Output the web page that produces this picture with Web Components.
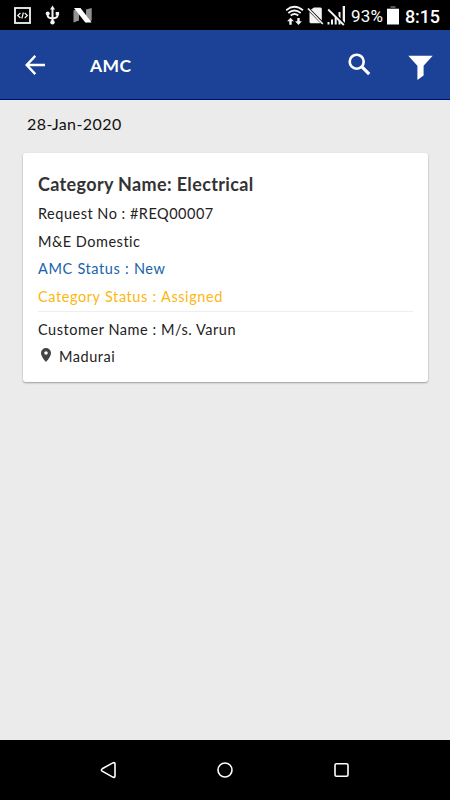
<!DOCTYPE html>
<html lang="en">
<head>
<meta charset="utf-8">
<meta name="viewport" content="width=device-width, initial-scale=1">
<title>AMC</title>
<style>
    body {
        margin: 0;
        background-color: #ebebeb;
        font-family: Lato, "Open Sans", sans-serif;
    }
</style>
</head>
<body>
<amc-screen></amc-screen>

<script>
class StatusBar extends HTMLElement {

    constructor() {
        super();
        this.shadowDOM = this.attachShadow({mode: "open"});
    }

    connectedCallback() {
        this.render();
    }

    render() {
        this.shadowDOM.innerHTML = `
        <style>
        :host {
            display: flex;
            justify-content: space-between;
            height: 30px;
            background-color: #000;
            color: #fff;
            font-family: Roboto, sans-serif;
        }

        svg {
            display: block;
        }

        .info {
            display: flex;
            padding-right: 10px;
            line-height: 33px;
        }

        .percent {
            width: 36px;
            font-size: 17px;
            letter-spacing: 0.2px;
            white-space: nowrap;
        }

        .clock {
            font-size: 18px;
            font-weight: 500;
            letter-spacing: -0.1px;
        }
        </style>
        <svg width="110" height="30" viewBox="0 0 110 30" fill="none" stroke="#f4f4f4">
            <rect x="15" y="8" width="15" height="15" stroke-width="1.8"/>
            <path d="M20.5 13 17.7 15.5 20.5 18M24.7 13 27.4 15.5 24.7 18M23.4 12.5 21.8 18.5" stroke-width="1.2"/>
            <path d="M52.5 8V22M47.7 13V15.5Q47.7 18 52.5 18.5M57.5 13V15.5Q57.5 18 52.5 18.5" stroke-width="2"/>
            <path d="M52.5 5.5 55 9.5H50ZM55.7 12h3.4v3.2h-3.4Z" fill="#f4f4f4" stroke="none"/>
            <circle cx="47.7" cy="13.5" r="2" fill="#f4f4f4" stroke="none"/>
            <circle cx="52.5" cy="22.3" r="2.2" fill="#f4f4f4" stroke="none"/>
            <path d="M73.5 10.5 79 8V20.5L73.5 22.5ZM86 9.5 91.7 8V20.5L86 22.5Z" fill="#929292" stroke="none"/>
            <path d="M74 8H80.5L91.7 22.5H85.3Z" fill="#fff" stroke="none"/>
        </svg>
        <div class="info">
            <svg width="65" height="30" viewBox="286 0 65 30" fill="#f4f4f4">
                <g fill="none" stroke="#f4f4f4" stroke-width="1.8">
                    <path d="M286 10.3Q294.5 3.2 303 10.3M288.3 13Q294.5 8 300.7 13M290.7 15.5Q294.5 12.5 298.3 15.5"/>
                </g>
                <path d="M290.5 17.8 293.9 21.3H291.7V24.8H289.3V21.3H287.1ZM297.3 18h2.4v3.3h2.2L298.5 25 295.1 21.3h2.2Z"/>
                <path d="M314 7.5H320.5Q321.8 7.5 321.8 9V20.5L311 9.5ZM309.5 12 320.5 23.3H311Q309.5 23.3 309.5 21.8Z"/>
                <path d="M308 8.5 322.8 24" stroke="#f4f4f4" stroke-width="1.8"/>
                <path d="M327.5 22h2v2.5h-2zM331 19.5h2v5h-2zM334.7 16.5h2v8h-2zM338.5 12h2v12.5h-2zM342.7 6h2.3v18.5h-2.3z"/>
                <path d="M329.5 8.6 345 24.6" stroke="#000" stroke-width="2.2"/>
                <path d="M328.2 9.5 343.8 25" stroke="#f4f4f4" stroke-width="1.8"/>
            </svg>
            <span class="percent">93%</span>
            <svg width="18" height="30" viewBox="387 0 18 30">
                <path d="M390.5 6h5v2h-5z" fill="#555"/>
                <path d="M387 8.7h12V24.5h-12z" fill="#fff"/>
            </svg>
            <span class="clock">8:15</span>
        </div>
        `;
    }
}

class AppBar extends HTMLElement {

    constructor() {
        super();
        this.shadowDOM = this.attachShadow({mode: "open"});
    }

    connectedCallback() {
        this.render();
    }

    render() {
        this.shadowDOM.innerHTML = `
        <style>
        :host {
            display: flex;
            align-items: center;
            box-sizing: border-box;
            height: 70px;
            padding: 0 17px 0 25px;
            border-bottom: 1px solid #001070;
            background-color: #1b4297;
            color: #fff;
        }

        h1 {
            flex: 1;
            margin: 0;
            padding: 3px 0 0 45px;
            font-size: 17.5px;
            font-weight: 700;
            letter-spacing: 0.4px;
            line-height: 24px;
        }

        svg {
            display: block;
        }

        .search {
            margin-right: 37px;
        }

        .filter {
            margin-top: 7px;
        }
        </style>
        <svg width="20" height="20" viewBox="0 0 20 20" fill="none" stroke="#fff" stroke-width="2.4">
            <path d="M10.3 .9 1.7 10 10.3 19.1M1.7 10H20"/>
        </svg>
        <h1><slot></slot></h1>
        <svg class="search" width="23" height="23" viewBox="0 0 23 23" fill="none" stroke="#fff">
            <circle cx="8.7" cy="8.7" r="7" stroke-width="2.6"/>
            <path d="M13.7 13.7 21.2 21.2" stroke-width="3.2"/>
        </svg>
        <svg class="filter" width="25" height="26" viewBox="0 0 25 26" fill="#fff">
            <path d="M.3.8H24.7L15.6 10.8V20.5L9.4 25V10.8Z"/>
        </svg>
        `;
    }
}

class RequestCard extends HTMLElement {

    constructor() {
        super();
        this.shadowDOM = this.attachShadow({mode: "open"});
    }

    connectedCallback() {
        this.render();
    }

    render() {
        this.shadowDOM.innerHTML = `
        <style>
        :host {
            display: block;
            box-sizing: border-box;
            height: 229px;
            margin: 0 22px 0 22.5px;
            padding: 17.5px 15px 0 15.5px;
            border-radius: 3px;
            background-color: #fff;
            box-shadow: 0 1px 2px rgba(0, 0, 0, 0.35);
            color: #222;
            font-size: 14.5px;
            letter-spacing: 0.5px;
            line-height: 27.5px;
            white-space: nowrap;
        }

        h2 {
            margin: 0 0 2px;
            color: #333;
            font-size: 18px;
            font-weight: 700;
            letter-spacing: 0.35px;
            line-height: 28px;
        }

        .customer {
            margin-top: 1px;
            padding-top: 4px;
            border-top: 1px solid #eee;
        }
        </style>
        <h2><slot name="title"></slot></h2>
        <slot></slot>
        <div class="customer"><slot name="customer"></slot></div>
        `;
    }
}

class CardLine extends HTMLElement {

    constructor() {
        super();
        this.shadowDOM = this.attachShadow({mode: "open"});
    }

    connectedCallback() {
        this.render();
    }

    render() {
        this.shadowDOM.innerHTML = `
        <style>
        :host {
            display: flex;
            align-items: center;
            height: 27.5px;
        }

        :host([status]) {
            letter-spacing: 0.58px;
            word-spacing: 0.4px;
        }

        :host([status="new"]) {
            color: #1763ad;
        }

        :host([status="assigned"]) {
            color: #fcb711;
        }

        :host([slot="customer"]) {
            letter-spacing: 0.54px;
        }

        svg {
            display: none;
            margin: -4px 8px 0 3px;
        }

        :host([place]) {
            margin-top: -0.5px;
        }

        :host([place]) svg {
            display: block;
        }
        </style>
        <svg width="10" height="14" viewBox="0 0 10 14" fill="#444">
            <path fill-rule="evenodd" d="M5 0A5 5 0 0 0 0 5C0 8.7 5 14 5 14S10 8.7 10 5A5 5 0 0 0 5 0ZM5 3.2A1.8 1.8 0 1 1 5 6.8 1.8 1.8 0 0 1 5 3.2Z"/>
        </svg>
        <span><slot></slot></span>
        `;
    }
}

class NavBar extends HTMLElement {

    constructor() {
        super();
        this.shadowDOM = this.attachShadow({mode: "open"});
    }

    connectedCallback() {
        this.render();
    }

    render() {
        this.shadowDOM.innerHTML = `
        <style>
        :host {
            display: flex;
            align-items: center;
            justify-content: space-between;
            box-sizing: border-box;
            height: 60px;
            padding: 0 100px;
            background-color: #000;
        }

        svg {
            display: block;
            fill: none;
            stroke: #fff;
            stroke-width: 1.6;
        }
        </style>
        <svg width="17" height="18" viewBox="0 0 17 18">
            <path d="M2.2 7.8 12.8 1.9Q15 1 15 3V15Q15 17 12.8 16.1L2.2 10.2Q.6 9 2.2 7.8Z"/>
        </svg>
        <svg width="16" height="16" viewBox="0 0 16 16">
            <circle cx="8" cy="8" r="7"/>
        </svg>
        <svg width="17" height="16" viewBox="0 0 17 16">
            <rect x="2" y="1.7" width="13" height="12.6" rx="1.5"/>
        </svg>
        `;
    }
}

class AmcScreen extends HTMLElement {

    constructor() {
        super();
        this.shadowDOM = this.attachShadow({mode: "open"});
    }

    connectedCallback() {
        this.render();
    }

    render() {
        this.shadowDOM.innerHTML = `
        <style>
        :host {
            display: flex;
            flex-direction: column;
            height: 100vh;
            min-height: 800px;
        }

        main {
            flex: 1;
        }

        time {
            display: block;
            height: 52.5px;
            padding-left: 27px;
            box-sizing: border-box;
            color: #111;
            font-size: 16px;
            letter-spacing: 0.42px;
            line-height: 47px;
        }
        </style>
        <status-bar></status-bar>
        <app-bar>AMC</app-bar>
        <main>
            <time datetime="2020-01-28">28-Jan-2020</time>
            <request-card>
                <span slot="title">Category Name: Electrical</span>
                <card-line>Request No : #REQ00007</card-line>
                <card-line>M&amp;E Domestic</card-line>
                <card-line status="new">AMC Status : New</card-line>
                <card-line status="assigned">Category Status : Assigned</card-line>
                <card-line slot="customer">Customer Name : M/s. Varun</card-line>
                <card-line slot="customer" place>Madurai</card-line>
            </request-card>
        </main>
        <nav-bar></nav-bar>
        `;
    }
}

customElements.define("status-bar", StatusBar);
customElements.define("app-bar", AppBar);
customElements.define("request-card", RequestCard);
customElements.define("card-line", CardLine);
customElements.define("nav-bar", NavBar);
customElements.define("amc-screen", AmcScreen);
</script>
</body>
</html>
